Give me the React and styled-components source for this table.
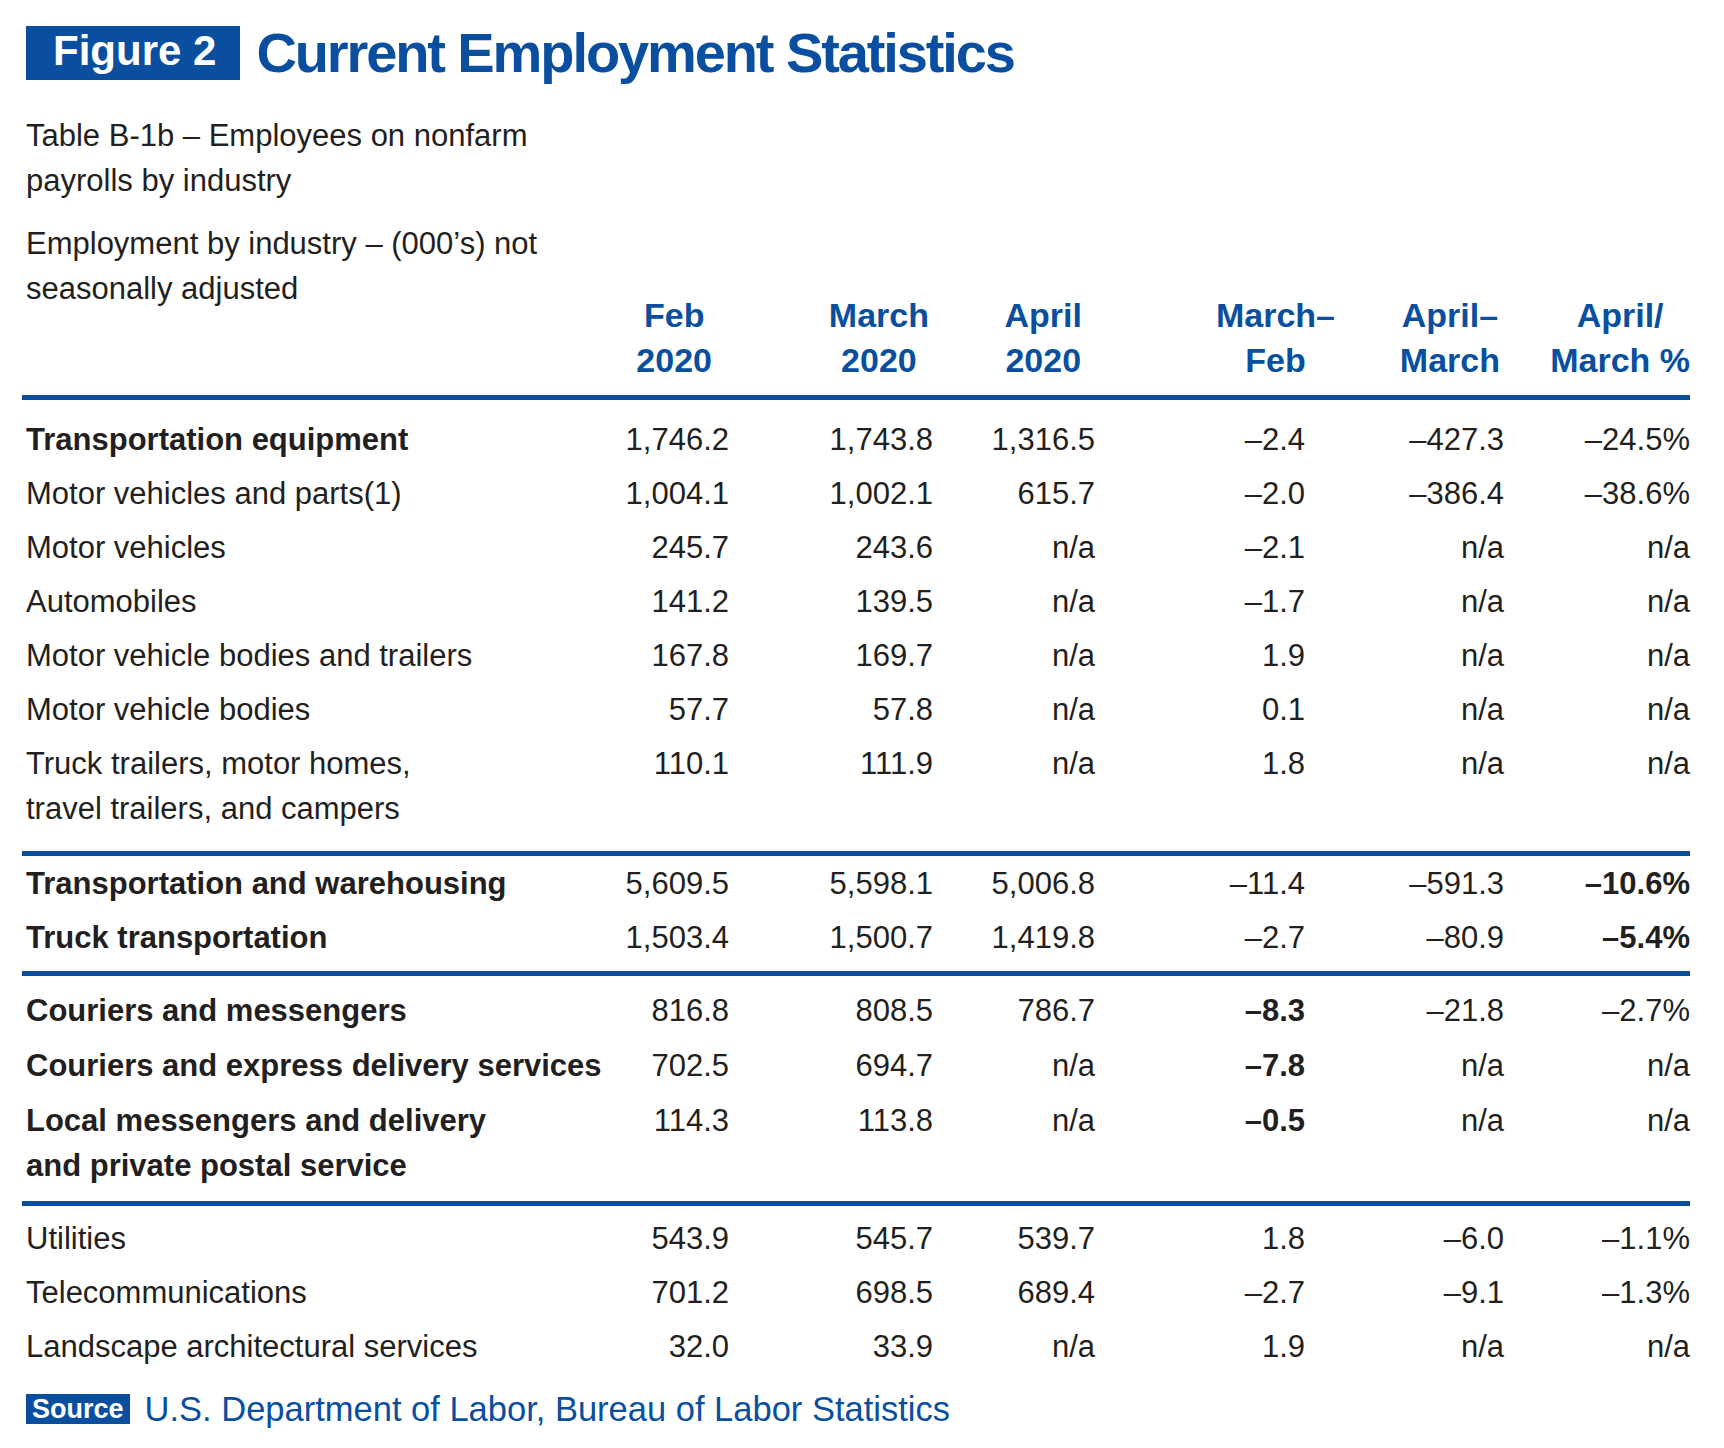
import React from "react";
import styled, { createGlobalStyle } from "styled-components";

const BLUE = "#0a4f9f";
const INK = "#231f20";
const COLS = "590px 117px 204px 162px 210px 199px 186px";

const Global = createGlobalStyle`
  html, body { margin: 0; padding: 0; background: #ffffff; }
  body { font-family: "Liberation Sans", Arial, Helvetica, sans-serif; color: ${INK}; }
`;

const Page = styled.div`
  width: 1668px;
  padding: 26px 0 0 22px;
`;

const TitleRow = styled.header`
  display: flex;
  align-items: flex-start;
  gap: 16px;
  margin-left: 4px;
`;

const FigureTag = styled.div`
  background: ${BLUE};
  color: #ffffff;
  font-weight: 700;
  font-size: 42px;
  line-height: 50px;
  height: 50px;
  padding: 0 24px 4px 27px;
  white-space: nowrap;
`;

const Title = styled.h1`
  margin: 0;
  color: ${BLUE};
  font-weight: 700;
  font-size: 56px;
  line-height: 54px;
  letter-spacing: -2.1px;
  white-space: nowrap;
`;

const HeadGrid = styled.div`
  display: grid;
  grid-template-columns: ${COLS};
  margin-top: 33px;
  padding-bottom: 12px;
`;

const Intro = styled.div`
  padding: 0 0 72px 4px;
  font-size: 31px;
  line-height: 45px;
  display: flex;
  flex-direction: column;
  gap: 18px;
`;

const IntroLine = styled.p`
  margin: 0;
`;

const HeadCell = styled.div`
  align-self: end;
  display: flex;
  justify-content: flex-end;
  margin-right: ${(p) => p.$mr}px;
`;

const HeadText = styled.div`
  display: flex;
  flex-direction: column;
  align-items: center;
  color: ${BLUE};
  font-weight: 700;
  font-size: 34px;
  line-height: 45px;
  white-space: nowrap;
`;

const Group = styled.section`
  display: grid;
  grid-template-columns: ${COLS};
  border-top: 5px solid ${BLUE};
  padding-top: ${(p) => p.$pt}px;
  padding-bottom: ${(p) => p.$pb}px;
`;

const Label = styled.div`
  padding: ${(p) => p.$pad}px 0 ${(p) => p.$pad}px 4px;
  font-size: 31px;
  line-height: 45px;
  font-weight: ${(p) => (p.$bold ? 700 : 400)};
`;

const Num = styled.div`
  padding: ${(p) => p.$pad}px 0;
  font-size: 31px;
  line-height: 45px;
  text-align: right;
  white-space: nowrap;
  font-weight: ${(p) => (p.$bold ? 700 : 400)};
`;

const SourceRow = styled.footer`
  display: flex;
  align-items: center;
  gap: 15px;
  margin: 16px 0 0 4px;
`;

const SourceTag = styled.span`
  background: ${BLUE};
  color: #ffffff;
  font-weight: 700;
  font-size: 27px;
  line-height: 30px;
  height: 30px;
  padding: 0 6px;
`;

const SourceText = styled.span`
  color: ${BLUE};
  font-size: 34.5px;
  line-height: 40px;
`;

const headers = [
  { lines: ["Feb", "2020"], mr: 17 },
  { lines: ["March", "2020"], mr: 4 },
  { lines: ["April", "2020"], mr: 13 },
  { lines: ["March–", "Feb"], mr: -30 },
  { lines: ["April–", "March"], mr: 4 },
  { lines: ["April/", "March %"], mr: 0 },
];

const groups = [
  {
    pt: 12.6,
    pb: 15.8,
    pad: 4.5,
    rows: [
      { label: ["Transportation equipment"], bold: true, v: ["1,746.2", "1,743.8", "1,316.5", "–2.4", "–427.3", "–24.5%"] },
      { label: ["Motor vehicles and parts(1)"], v: ["1,004.1", "1,002.1", "615.7", "–2.0", "–386.4", "–38.6%"] },
      { label: ["Motor vehicles"], v: ["245.7", "243.6", "n/a", "–2.1", "n/a", "n/a"] },
      { label: ["Automobiles"], v: ["141.2", "139.5", "n/a", "–1.7", "n/a", "n/a"] },
      { label: ["Motor vehicle bodies and trailers"], v: ["167.8", "169.7", "n/a", "1.9", "n/a", "n/a"] },
      { label: ["Motor vehicle bodies"], v: ["57.7", "57.8", "n/a", "0.1", "n/a", "n/a"] },
      { label: ["Truck trailers, motor homes,", "travel trailers, and campers"], v: ["110.1", "111.9", "n/a", "1.8", "n/a", "n/a"] },
    ],
  },
  {
    pt: 0,
    pb: 6.4,
    pad: 4.5,
    rows: [
      { label: ["Transportation and warehousing"], bold: true, v: ["5,609.5", "5,598.1", "5,006.8", "–11.4", "–591.3", "–10.6%"], b: [5] },
      { label: ["Truck transportation"], bold: true, v: ["1,503.4", "1,500.7", "1,419.8", "–2.7", "–80.9", "–5.4%"], b: [5] },
    ],
  },
  {
    pt: 7.5,
    pb: 7.5,
    pad: 5,
    rows: [
      { label: ["Couriers and messengers"], bold: true, v: ["816.8", "808.5", "786.7", "–8.3", "–21.8", "–2.7%"], b: [3] },
      { label: ["Couriers and express delivery services"], bold: true, v: ["702.5", "694.7", "n/a", "–7.8", "n/a", "n/a"], b: [3] },
      { label: ["Local messengers and delivery", "and private postal service"], bold: true, v: ["114.3", "113.8", "n/a", "–0.5", "n/a", "n/a"], b: [3] },
    ],
  },
  {
    pt: 5.5,
    pb: 0,
    pad: 4.5,
    rows: [
      { label: ["Utilities"], v: ["543.9", "545.7", "539.7", "1.8", "–6.0", "–1.1%"] },
      { label: ["Telecommunications"], v: ["701.2", "698.5", "689.4", "–2.7", "–9.1", "–1.3%"] },
      { label: ["Landscape architectural services"], v: ["32.0", "33.9", "n/a", "1.9", "n/a", "n/a"] },
    ],
  },
];

export default function App() {
  return (
    <>
      <Global />
      <Page>
        <TitleRow>
          <FigureTag>Figure 2</FigureTag>
          <Title>Current Employment Statistics</Title>
        </TitleRow>

        <HeadGrid>
          <Intro>
            <IntroLine>
              Table B-1b – Employees on nonfarm
              <br />
              payrolls by industry
            </IntroLine>
            <IntroLine>
              Employment by industry – (000’s) not
              <br />
              seasonally adjusted
            </IntroLine>
          </Intro>
          {headers.map((h, i) => (
            <HeadCell key={i} $mr={h.mr}>
              <HeadText>
                {h.lines.map((l, j) => (
                  <span key={j}>{l}</span>
                ))}
              </HeadText>
            </HeadCell>
          ))}
        </HeadGrid>

        {groups.map((g, gi) => (
          <Group key={gi} $pt={g.pt} $pb={g.pb}>
            {g.rows.map((r, ri) => (
              <React.Fragment key={ri}>
                <Label $bold={r.bold} $pad={g.pad}>
                  {r.label.map((l, li) => (
                    <React.Fragment key={li}>
                      {li > 0 && <br />}
                      {l}
                    </React.Fragment>
                  ))}
                </Label>
                {r.v.map((val, vi) => (
                  <Num key={vi} $pad={g.pad} $bold={r.b && r.b.includes(vi)}>
                    {val}
                  </Num>
                ))}
              </React.Fragment>
            ))}
          </Group>
        ))}

        <SourceRow>
          <SourceTag>Source</SourceTag>
          <SourceText>U.S. Department of Labor, Bureau of Labor Statistics</SourceText>
        </SourceRow>
      </Page>
    </>
  );
}
